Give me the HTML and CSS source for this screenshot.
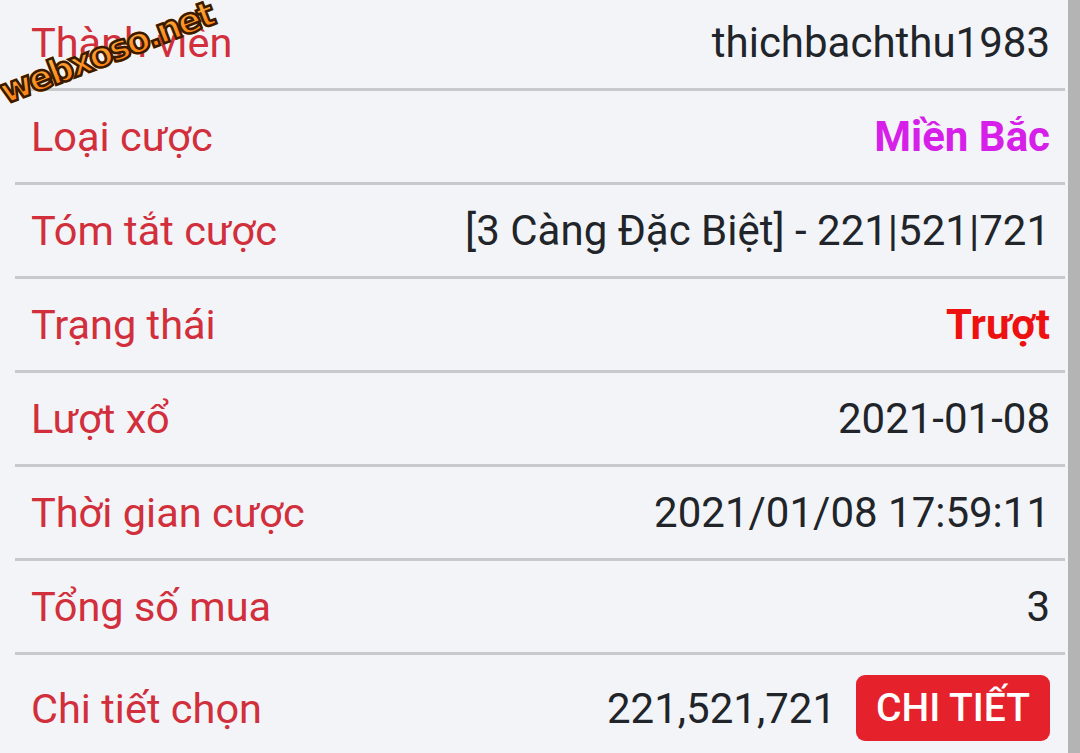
FILE: index.html
```html
<!DOCTYPE html>
<html lang="vi">
<head>
<meta charset="utf-8">
<link rel="stylesheet" href="styles.css">
</head>
<body>
<div class="page">
  <main class="main">
    <div class="list">
      <div class="row"><span class="label">Thành viên</span><span class="value">thichbachthu1983</span></div>
      <div class="row"><span class="label">Loại cược</span><span class="value magenta">Miền Bắc</span></div>
      <div class="row"><span class="label">Tóm tắt cược</span><span class="value">[3 Càng Đặc Biệt] - 221|521|721</span></div>
      <div class="row"><span class="label">Trạng thái</span><span class="value lost">Trượt</span></div>
      <div class="row"><span class="label">Lượt xổ</span><span class="value">2021-01-08</span></div>
      <div class="row"><span class="label">Thời gian cược</span><span class="value">2021/01/08 17:59:11</span></div>
      <div class="row"><span class="label">Tổng số mua</span><span class="value">3</span></div>
      <div class="row last"><span class="label">Chi tiết chọn</span><span class="value with-btn">221,521,721<button class="btn">CHI TIẾT</button></span></div>
    </div>
    <div class="watermark">webxoso.net</div>
  </main>
  <div class="scrollbar"></div>
</div>
</body>
</html>
```
FILE: styles.css
```css
html, body {
  margin: 0;
  padding: 0;
  height: 100%;
  overflow: hidden;
}
body {
  background: #f3f4f8;
  font-family: Roboto, "Liberation Sans", sans-serif;
}
.page {
  display: flex;
  height: 753px;
}
.main {
  position: relative;
  flex: 1;
  padding: 0 3px 0 15px;
}
.scrollbar {
  width: 12px;
  background: #b4b4b4;
}
.list {
  margin-top: -3px;
}
.row {
  display: flex;
  align-items: center;
  justify-content: space-between;
  padding: 20px 15px 20px 16px;
  border-bottom: 3px solid #c8c9cd;
  line-height: 51px;
  font-size: 42px;
}
.row.last {
  border-bottom: none;
}
.label {
  color: #d12f3b;
  font-size: 41.5px;
}
.value {
  color: #212529;
}
.magenta {
  color: #d61fe8;
  font-weight: bold;
}
.lost {
  color: #ee1111;
  font-weight: bold;
}
.with-btn {
  display: flex;
  align-items: center;
  gap: 20px;
}
.btn {
  font-family: Roboto, "Liberation Sans", sans-serif;
  font-size: 39px;
  font-weight: 500;
  color: #fff;
  background: #e5212b;
  border: none;
  border-radius: 9px;
  width: 194px;
  height: 66px;
  padding: 0;
  line-height: 66px;
}
.watermark {
  position: absolute;
  left: 7px;
  top: 76px;
  line-height: 32px;
  font-family: "DejaVu Sans", sans-serif;
  font-weight: bold;
  font-size: 35px;
  letter-spacing: -2.4px;
  color: #ff8a1c;
  background: linear-gradient(#ffb347, #ff7a0a);
  -webkit-background-clip: text;
  background-clip: text;
  -webkit-text-fill-color: transparent;
  -webkit-text-stroke: 2.5px #3a1a00;
  paint-order: stroke fill;
  transform: rotate(-21deg);
  transform-origin: left bottom;
}
```
